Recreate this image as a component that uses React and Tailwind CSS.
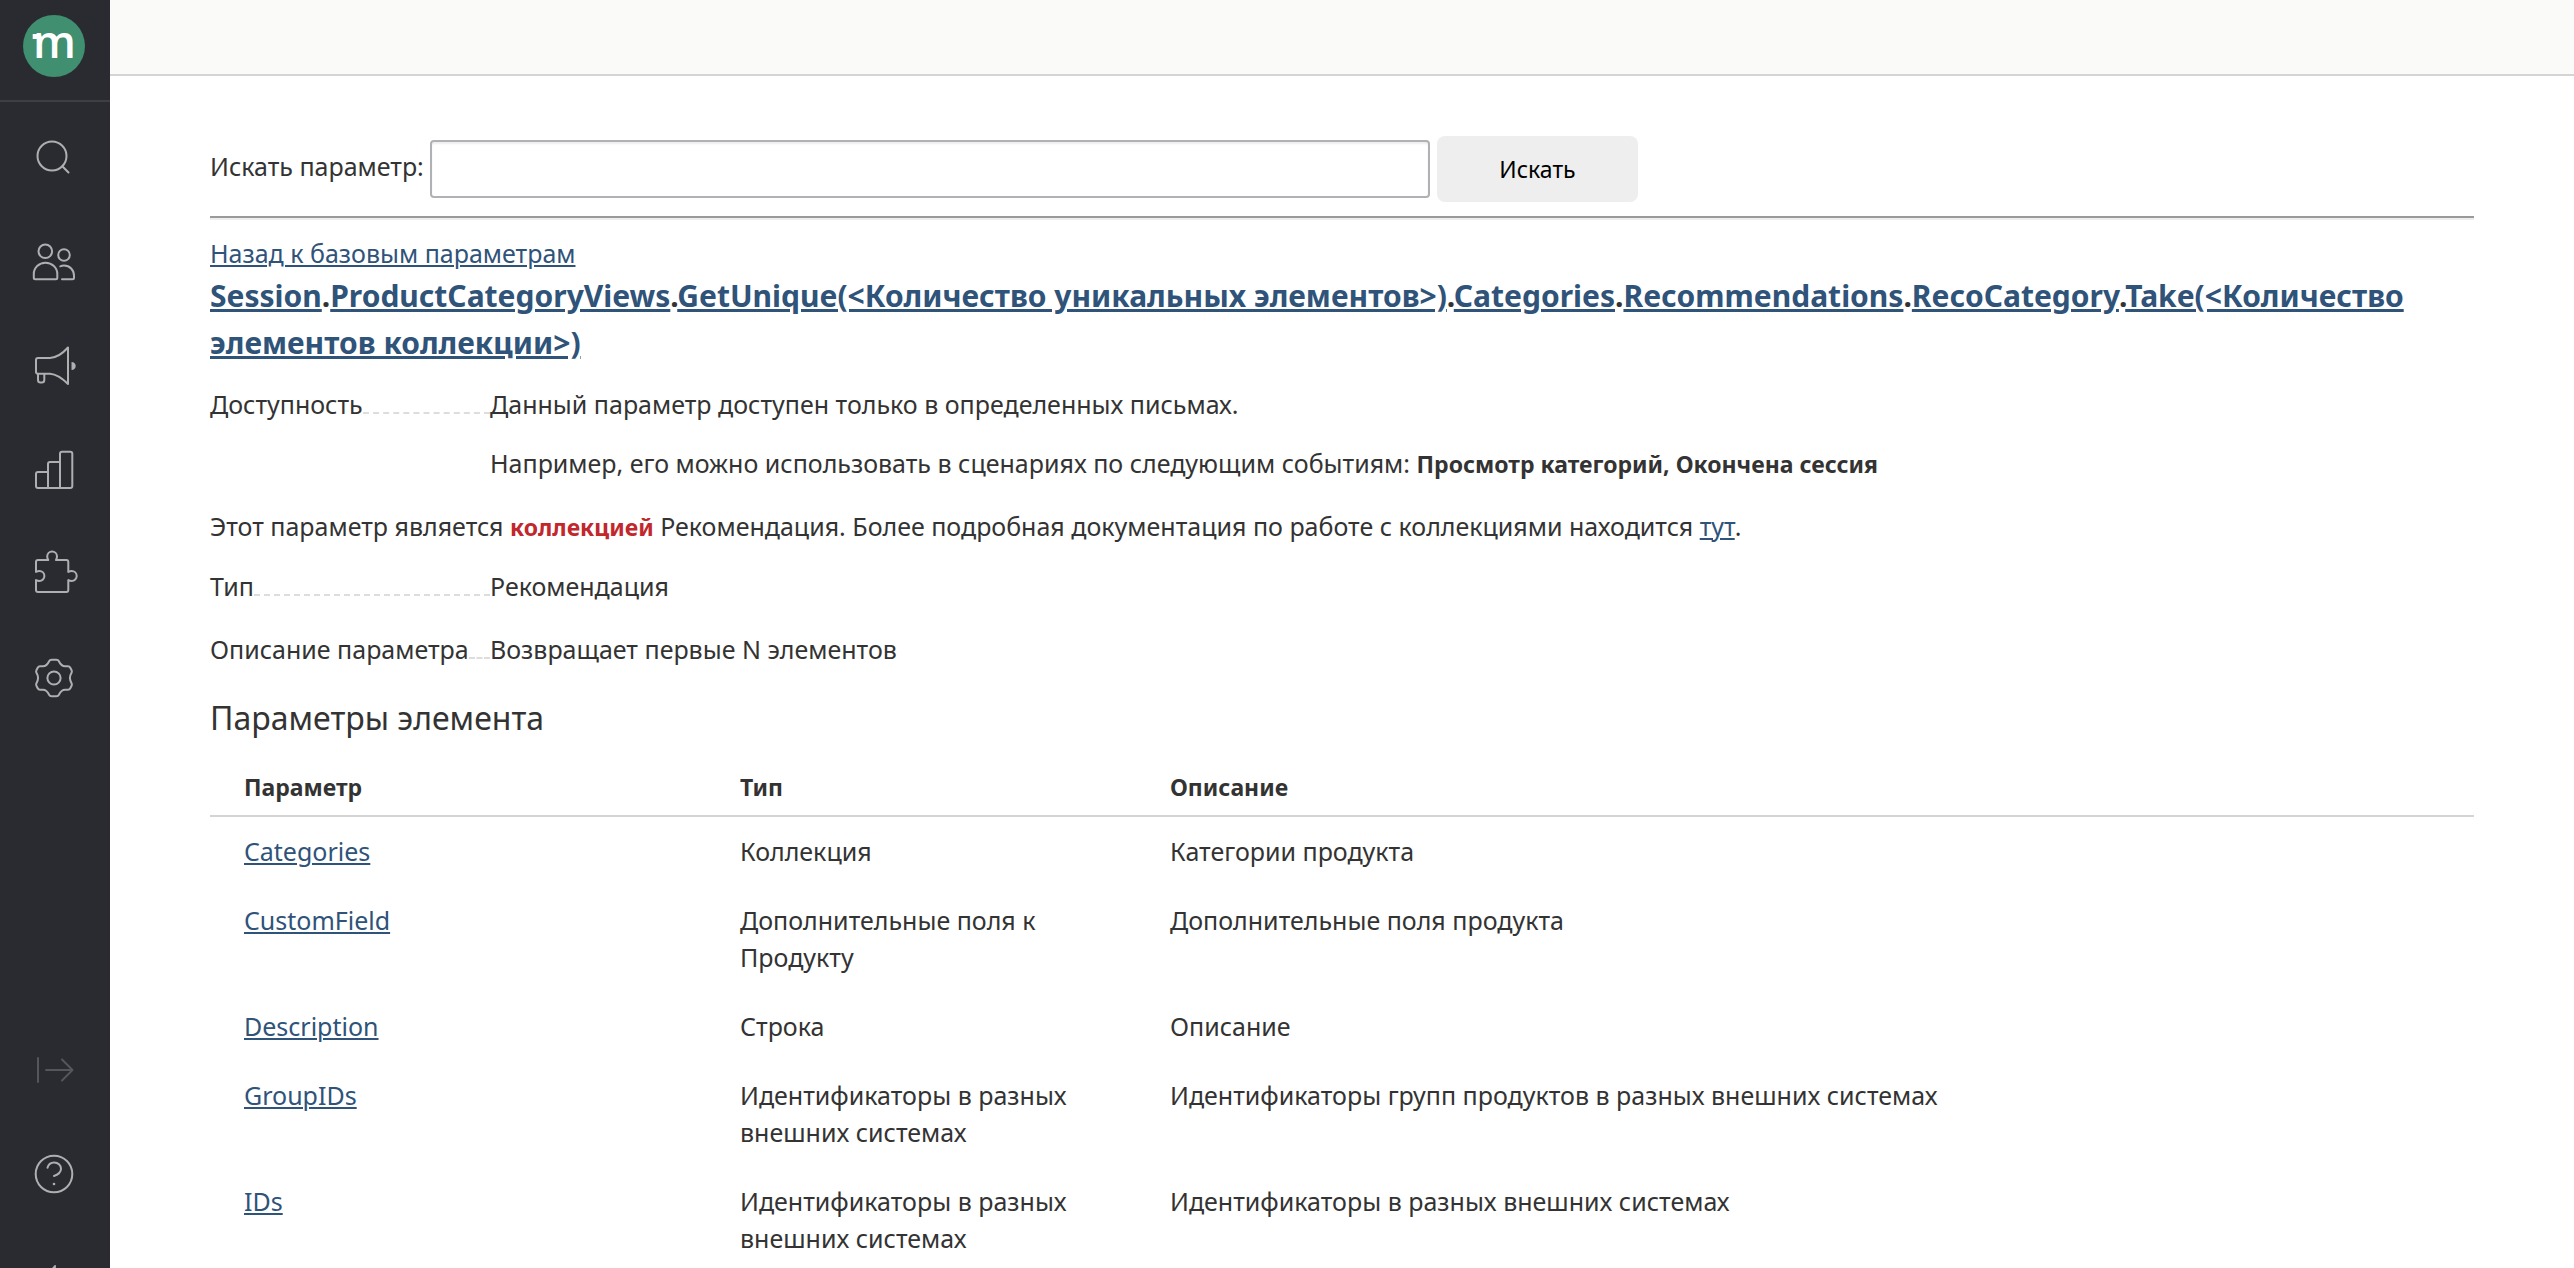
import React, { useState } from "react";

const Icon = ({ children }) => (
  <svg
    viewBox="0 0 48 48"
    className="w-12 h-12"
    fill="none"
    stroke="currentColor"
    strokeWidth="2"
    strokeLinecap="round"
    strokeLinejoin="round"
    aria-hidden="true"
  >
    {children}
  </svg>
);

const SearchIcon = () => (
  <Icon>
    <circle cx="21" cy="22" r="14.5" />
    <path d="M31.3 32.3 37.5 38.5" />
  </Icon>
);

const PeopleIcon = () => (
  <Icon>
    <circle cx="14.3" cy="13.3" r="6.8" />
    <circle cx="33" cy="17" r="5.8" />
    <path d="M2.8 36c0-6.400 5.100-11.300 11.700-11.300S26.300 29.600 26.300 36v3.800c0 1-.5 1.500-1.500 1.500H4.300c-1 0-1.500-.5-1.500-1.500z" />
    <path d="M29.3 28.300c1.200-.5 2.400-.7 3.700-.7 5.800 0 10 4.200 10 10v2.200c0 1-.5 1.500-1.500 1.500H31" />
  </Icon>
);

const MegaphoneIcon = () => (
  <Icon>
    <path d="M7 16h12C27 15.500 33 10 37 5.500V42C33 38 27 32.300 19 31.700H7c-1.300 0-2-.7-2-2V18c0-1.300.7-2 2-2z" />
    <path d="M7 32v6c0 1.700.9 2.600 2.600 2.600h1.100c1.700 0 2.600-.9 2.600-2.600v-6" />
    <path d="M40.500 20c2.700 0 4.200 1.700 4.200 4s-1.500 4-4.200 4z" fill="currentColor" stroke="none" />
  </Icon>
);

const ChartIcon = () => (
  <Icon>
    <path d="M29 42V7.700c0-1.300.7-2 2-2h8.300c1.300 0 2 .7 2 2V40c0 1.300-.7 2-2 2H7c-1.300 0-2-.7-2-2V28c0-1.300.7-2 2-2h10" />
    <path d="M17 42V18c0-1.300.7-2 2-2h10" />
  </Icon>
);

const PuzzleIcon = () => (
  <Icon>
    <path d="M7 10h10.300c-.8-1.200-1.100-2.400-1.100-3.600a4.900 4.900 0 0 1 9.800 0c0 1.200-.3 2.400-1.100 3.600h10.400c1.300 0 2 .7 2 2v9.900c1.200-.6 2.300-.9 3.400-.9a5 5 0 0 1 0 10c-1.100 0-2.200-.3-3.400-.9V40c0 1.300-.7 2-2 2H7c-1.300 0-2-.7-2-2v-9.900c1.200.6 2.300.9 3.400.9a5 5 0 0 0 0-10c-1.100 0-2.200.3-3.400.9V12c0-1.300.7-2 2-2z" />
  </Icon>
);

const GearIcon = () => (
  <Icon>
    <circle cx="23" cy="24" r="6.600" />
    <path d="M20.500 5.700h5c1.200 0 1.900.6 2.400 1.600 1.600 3.400 3.400 5.200 6.600 5h2.400c1.200 0 1.900.4 2.400 1.400l1.300 2.600c.5 1 .4 1.900-.2 2.800-2 3.400-2 6.400 0 9.800.6.900.7 1.800.2 2.800l-1.300 2.600c-.5 1-1.200 1.400-2.400 1.400h-2.400c-3.200-.2-5 1.600-6.600 5-.5 1-1.200 1.600-2.400 1.600h-5c-1.200 0-1.900-.6-2.400-1.600-1.600-3.400-3.400-5.200-6.600-5H9.100c-1.200 0-1.900-.4-2.400-1.400l-1.300-2.600c-.5-1-.4-1.900.2-2.800 2-3.400 2-6.400 0-9.800-.6-.9-.7-1.800-.2-2.800l1.300-2.600c.5-1 1.200-1.400 2.400-1.400h2.400c3.200.2 5-1.600 6.600-5 .5-1 1.200-1.600 2.400-1.600z" />
  </Icon>
);

const ExpandIcon = () => (
  <Icon>
    <path d="M7 12v24M15 24h26.500M31 13.500 41.500 24 31 34.500" />
  </Icon>
);

const HelpIcon = () => (
  <Icon>
    <circle cx="23" cy="24" r="18.300" />
    <path d="M16.500 17.700c.8-3.300 3.300-5.300 6.600-5.300 3.900 0 6.900 2.600 6.900 6.300 0 4.200-3.200 5.900-7 7.300" />
    <circle cx="23" cy="34" r="1.300" fill="currentColor" stroke="none" />
  </Icon>
);

const BoltIcon = () => (
  <Icon>
    <path d="M24 12 12 27h9l-2 12 13-17h-9z" fill="currentColor" />
  </Icon>
);

const navItems = [
  { label: "Поиск", icon: SearchIcon },
  { label: "Клиенты", icon: PeopleIcon },
  { label: "Кампании", icon: MegaphoneIcon },
  { label: "Отчёты", icon: ChartIcon },
  { label: "Интеграции", icon: PuzzleIcon },
  { label: "Настройки", icon: GearIcon },
];

const path = [
  "Session",
  "ProductCategoryViews",
  "GetUnique(<Количество уникальных элементов>)",
  "Categories",
  "Recommendations",
  "RecoCategory",
  "Take(<Количество элементов коллекции>)",
];

const params = [
  { name: "Categories", type: "Коллекция", text: "Категории продукта" },
  { name: "CustomField", type: "Дополнительные поля к Продукту", text: "Дополнительные поля продукта" },
  { name: "Description", type: "Строка", text: "Описание" },
  {
    name: "GroupIDs",
    type: "Идентификаторы в разных внешних системах",
    text: "Идентификаторы групп продуктов в разных внешних системах",
  },
  {
    name: "IDs",
    type: "Идентификаторы в разных внешних системах",
    text: "Идентификаторы в разных внешних системах",
  },
];

const NavButton = ({ label, children }) => (
  <button type="button" aria-label={label} className="h-[104px] w-full shrink-0 flex items-center justify-center">
    {children}
  </button>
);

const Sidebar = () => (
  <aside className="sticky top-0 h-screen w-[110px] shrink-0 flex flex-col bg-[#2a2b30] text-[#aeafb1] overflow-hidden">
    <a href="#" aria-label="mindbox" className="h-[102px] shrink-0 border-b-2 border-[#3e3f44]">
      <svg viewBox="0 0 110 100" className="w-[110px] h-[100px]">
        <circle cx="54" cy="46" r="31" fill="#3f8f70" />
        <rect x="32.700" y="34" width="6" height="5" fill="#fff" />
        <text x="33" y="58" fontSize="45" fontWeight="600" fontFamily="'Open Sans', sans-serif" fill="#fff">
          m
        </text>
      </svg>
    </a>
    <nav className="flex flex-col pt-1">
      {navItems.map(({ label, icon: Glyph }) => (
        <NavButton key={label} label={label}>
          <Glyph />
        </NavButton>
      ))}
    </nav>
    {/* The last item runs below the fold */}
    <div className="mt-auto h-[250px] shrink-0 flex flex-col overflow-hidden">
      <div className="text-[#55565a]">
        <NavButton label="Развернуть меню">
          <ExpandIcon />
        </NavButton>
      </div>
      <NavButton label="Помощь">
        <HelpIcon />
      </NavButton>
      <NavButton label="Обновления">
        <BoltIcon />
      </NavButton>
    </div>
  </aside>
);

const Link = ({ children }) => (
  <a href="#" className="text-[#2f5379] underline decoration-2 underline-offset-2">
    {children}
  </a>
);

// Label with a dashed leader running up to the value column
const Property = ({ label, children }) => (
  <div className="flex items-baseline">
    <dt className="w-[280px] shrink-0 flex items-baseline">
      {label}
      <span className="flex-1 border-b-2 border-dashed border-[#dddddd]" />
    </dt>
    <dd className="flex-1">{children}</dd>
  </div>
);

const App = () => {
  const [query, setQuery] = useState("");

  return (
    <div className="flex min-h-screen bg-white text-[#333333] text-[25px] leading-[37px] font-['Noto_Sans','Liberation_Sans',sans-serif]">
      <Sidebar />

      <div className="flex-1 min-w-0">
        <header className="h-[76px] bg-[#fafaf8] border-b-2 border-[#d4d4d4]" />

        <main className="px-[100px] pt-[60px]">
          <form className="flex items-center" onSubmit={(e) => e.preventDefault()}>
            <label htmlFor="query" className="w-[220px] pb-[6px] whitespace-nowrap">
              Искать параметр:
            </label>
            <input
              id="query"
              type="text"
              value={query}
              onChange={(e) => setQuery(e.target.value)}
              className="w-[1000px] h-[58px] px-3 bg-white border-2 border-[#b0b1b5] rounded-[4px] shadow-[inset_0_2px_2px_#eeeeee] outline-none"
            />
            <button type="submit" className="ml-[7px] w-[201px] h-[66px] bg-[#eeeeee] rounded-lg text-black text-[23px]">
              Искать
            </button>
          </form>

          <hr className="mt-[14px] h-1 border-0 border-t-2 border-[#9a9a9a] bg-[#eeeeee]" />

          <div className="mt-[15px]">
            <Link>Назад к базовым параметрам</Link>
          </div>

          <h1 className="text-[30px] leading-[47px] font-bold">
            {path.map((part, i) => (
              <React.Fragment key={part}>
                {i > 0 && "."}
                <a href="#" className="text-[#2f5379] underline decoration-3 underline-offset-2">
                  {part}
                </a>
              </React.Fragment>
            ))}
          </h1>

          <dl className="mt-5">
            <Property label="Доступность">
              <p>Данный параметр доступен только в определенных письмах.</p>
              <p className="mt-[22px]">
                Например, его можно использовать в сценариях по следующим событиям:{" "}
                <b className="text-[23px] leading-none">Просмотр категорий, Окончена сессия</b>
              </p>
            </Property>
          </dl>

          <p className="mt-[26px]">
            Этот параметр является <b className="text-[23px] leading-none text-[#c1272d]">коллекцией</b> Рекомендация.
            Более подробная документация по работе с коллекциями находится <Link>тут</Link>.
          </p>

          <dl className="mt-[23px] flex flex-col gap-[26px]">
            <Property label="Тип">Рекомендация</Property>
            <Property label="Описание параметра">Возвращает первые N элементов</Property>
          </dl>

          <h2 className="mt-[26px] text-[32px] leading-[47px]">Параметры элемента</h2>

          <table className="mt-3 w-full table-fixed text-left align-top">
            <thead className="text-[23px]">
              <tr className="border-b-2 border-[#d4d4d4]">
                <th className="w-[530px] pl-[34px] pt-4 pb-[9px] font-bold">Параметр</th>
                <th className="w-[430px] pr-[60px] pt-4 pb-[9px] font-bold">Тип</th>
                <th className="pt-4 pb-[9px] font-bold">Описание</th>
              </tr>
            </thead>
            <tbody>
              {params.map((p) => (
                <tr key={p.name} className="align-top">
                  <td className="pl-[34px] py-4">
                    <Link>{p.name}</Link>
                  </td>
                  <td className="pr-[60px] py-4">{p.type}</td>
                  <td className="py-4">{p.text}</td>
                </tr>
              ))}
            </tbody>
          </table>
        </main>
      </div>
    </div>
  );
};

export default App;
